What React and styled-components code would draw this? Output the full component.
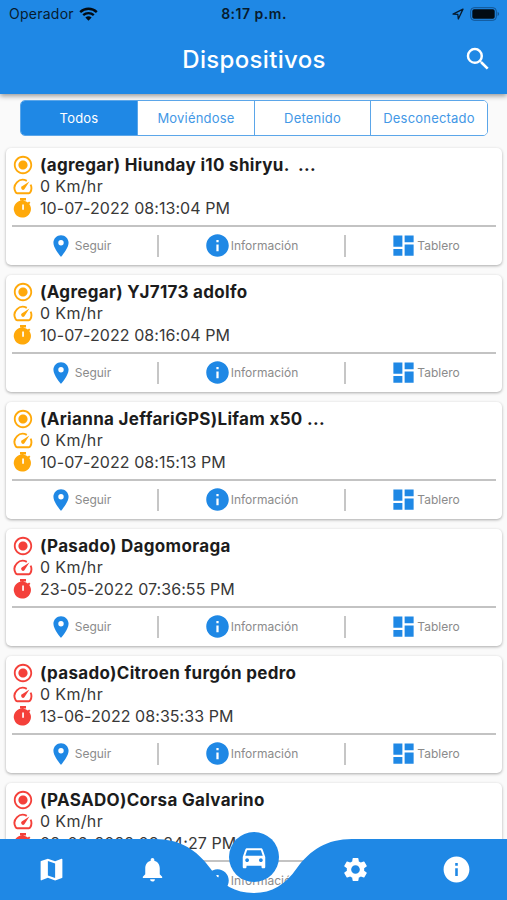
import React from 'react'
import styled, { createGlobalStyle } from 'styled-components'
import {
    MdDashboard,
    MdDirectionsCar,
    MdInfo,
    MdMap,
    MdNotifications,
    MdPlace,
    MdRadioButtonChecked,
    MdSearch,
    MdSettings,
} from 'react-icons/md'

const BLUE = '#1f88e5'
const AMBER = '#ffa90a'
const RED = '#f4403a'

const GlobalStyle = createGlobalStyle`
    * {
        box-sizing: border-box;
    }

    body {
        margin: 0;
        overflow: hidden;
        background: #fafafa;
        font-family: Inter, "Liberation Sans", sans-serif;
    }

    svg {
        display: block;
        flex: none;
    }
`

const Screen = styled.div`
    position: relative;
    display: flex;
    flex-direction: column;
    width: 507px;
    height: 900px;
    overflow: hidden;
`

const Header = styled.header`
    flex: none;
    height: 94px;
    background: ${BLUE};
    box-shadow: 0 2px 5px rgba(0, 0, 0, 0.4);
`

const StatusBar = styled.div`
    display: grid;
    grid-template-columns: 1fr auto 1fr;
    align-items: center;
    height: 27px;
    padding: 0 7px 0 9px;
    color: #071b2e;
    font-size: 14px;
`

const Carrier = styled.div`
    display: flex;
    align-items: center;
    gap: 5px;
    letter-spacing: 0.25px;
`

const Clock = styled.div`
    margin-left: -1px;
    font-weight: 600;
    letter-spacing: 0.5px;
`

const Power = styled.div`
    display: flex;
    align-items: center;
    justify-content: flex-end;
    gap: 6px;
`

const TitleBar = styled.div`
    display: grid;
    grid-template-columns: 48px 1fr 48px;
    align-items: center;
    height: 64px;
    padding: 0 5px 0 6px;
    color: #fff;
`

const Title = styled.h1`
    grid-column: 2;
    margin: 0;
    font-size: 24px;
    font-weight: 500;
    letter-spacing: 0.33px;
    text-align: center;
`

const SearchButton = styled.div`
    display: flex;
    justify-content: center;
`

const Tabs = styled.div`
    display: grid;
    flex: none;
    grid-template-columns: 116px 117px 116px 1fr;
    height: 36px;
    margin: 6px 19px 12px 20px;
    overflow: hidden;
    background: #fff;
    border: 1px solid #5ba6e9;
    border-radius: 5px;
`

const Tab = styled.div`
    display: flex;
    align-items: center;
    justify-content: center;
    border-left: ${(props) => (props.$first ? '0' : '1px solid #5ba6e9')};
    background: ${(props) => (props.$active ? BLUE : '#fff')};
    color: ${(props) => (props.$active ? '#fff' : '#4398e6')};
    font-size: 13px;
    letter-spacing: 0.2px;
`

const List = styled.main`
    display: flex;
    flex-direction: column;
    gap: 10px;
    padding: 0 5px 0 6px;
`

const Card = styled.article`
    flex: none;
    height: 117px;
    padding: 6px 6px 0;
    background: #fff;
    border-radius: 5px;
    box-shadow: 0 1px 3px rgba(0, 0, 0, 0.32);
`

const Line = styled.div`
    display: flex;
    align-items: center;
    gap: 7px;
    height: ${(props) => props.$height || 22}px;
    padding-left: 1px;
    color: #383838;
    font-size: 16px;
    letter-spacing: ${(props) => props.$spacing || 0.06}px;
    white-space: pre;
`

const IconSlot = styled.span`
    display: flex;
    justify-content: center;
    width: 20px;
    color: ${(props) => props.$color};
`

const Name = styled.strong`
    color: #1c1c1c;
    font-size: 17px;
    font-weight: 700;
    letter-spacing: 0.32px;
`

const Actions = styled.div`
    display: grid;
    grid-template-columns: 145px 1px 186px 1px 1fr;
    align-items: center;
    height: 39px;
    margin-top: 5px;
    border-top: 2px solid #c3c3c3;
`

const Divider = styled.span`
    width: 2px;
    height: 22px;
    background: #c6c6c6;
`

const Action = styled.div`
    display: flex;
    align-items: center;
    justify-content: center;
    gap: ${(props) => props.$gap}px;
    padding: ${(props) => props.$pad || 0};
    color: #8b8b8b;
    font-size: 12px;

    svg {
        color: ${BLUE};
    }
`

const Nav = styled.nav`
    position: absolute;
    right: 0;
    bottom: 0;
    left: 0;
    height: 69px;
`

const NavShape = styled.svg`
    width: 507px;
    height: 61px;
    margin-top: 8px;
    fill: ${BLUE};
`

const NavItems = styled.div`
    position: absolute;
    inset: 8px 0 0;
    display: grid;
    grid-template-columns: repeat(5, 1fr);
    align-items: center;
    justify-items: center;
    padding-left: 1px;
    color: #fff;
`

const Current = styled.div`
    display: flex;
    align-items: center;
    justify-content: center;
    width: 50px;
    height: 50px;
    margin-top: -26px;
    background: ${BLUE};
    border-radius: 50%;
`

const Wifi = () => (
    <svg width="19" height="14" viewBox="0 0 19 14" fill="none" stroke="#020b13">
        <path d="M1.2 5.1a12 12 0 0 1 16.6 0" strokeWidth="2.4" />
        <path d="M4.2 8.2a7.7 7.7 0 0 1 10.6 0" strokeWidth="2.3" />
        <path d="M6.4 10.6a4.5 4.5 0 0 1 6.2 0L9.5 13.8Z" fill="#020b13" stroke="none" />
    </svg>
)

const Gauge = () => (
    <svg width="20" height="17" viewBox="0 0 20 17" fill="none">
        <path
            d="M13.8 2.9A8.2 8.2 0 0 0 2.7 14.2Q3.1 15.2 4.1 15.2h11.8q1 0 1.4-1A8.2 8.2 0 0 0 17.6 6.6"
            stroke="currentColor"
            strokeWidth="1.9"
        />
        <path
            d="M16.4 3.6 11.4 11.3A1.9 1.9 0 0 1 8.7 8.6Z"
            fill="currentColor"
        />
    </svg>
)

const Stopwatch = () => (
    <svg width="20" height="20" viewBox="0 0 20 20">
        <path
            fill="currentColor"
            fillRule="evenodd"
            d="M7 0h6v2.4H7zM10 2.4a8.3 8.3 0 0 1 4.9 2.1l1.2-1.1 1.3 1.3-1.1 1.2A8.6 8.6 0 1 1 10 2.4zM9.2 6.6v5.2h1.7V6.6z"
        />
    </svg>
)

const LocationArrow = () => (
    <svg width="12" height="12" viewBox="0 0 12 12" fill="none">
        <path
            d="M1 6.1 11 1.1 6.3 11 5.8 6.3Z"
            stroke="currentColor"
            strokeWidth="1.3"
            strokeLinejoin="round"
        />
    </svg>
)

const Battery = () => (
    <svg width="30" height="14" viewBox="0 0 30 14">
        <rect x=".7" y=".7" width="25.6" height="12.6" rx="3.4" fill="none" stroke="#125391" />
        <rect x="2.3" y="2.3" width="22.4" height="9.4" rx="1.8" fill="#020b13" />
        <path d="M27.6 4.8q3 2.2 0 4.4z" fill="#125391" />
    </svg>
)

const devices = [
    { name: '(agregar) Hiunday i10 shiryu.  ...', date: '10-07-2022 08:13:04 PM', color: AMBER },
    { name: '(Agregar) YJ7173 adolfo', date: '10-07-2022 08:16:04 PM', color: AMBER },
    { name: '(Arianna JeffariGPS)Lifam x50 ...', date: '10-07-2022 08:15:13 PM', color: AMBER },
    { name: '(Pasado) Dagomoraga', date: '23-05-2022 07:36:55 PM', color: RED },
    { name: '(pasado)Citroen furgón pedro', date: '13-06-2022 08:35:33 PM', color: RED },
    { name: '(PASADO)Corsa Galvarino', date: '02-06-2022 08:24:27 PM', color: RED },
]

const tabs = ['Todos', 'Moviéndose', 'Detenido', 'Desconectado']

const Device = ({ name, date, color }) => (
    <Card>
        <Line>
            <IconSlot $color={color}>
                <MdRadioButtonChecked size={22} />
            </IconSlot>
            <Name>{name}</Name>
        </Line>
        <Line $height={20} $spacing={0.35}>
            <IconSlot $color={color}>
                <Gauge />
            </IconSlot>
            0 Km/hr
        </Line>
        <Line $height={24}>
            <IconSlot $color={color}>
                <Stopwatch />
            </IconSlot>
            {date}
        </Line>
        <Actions>
            <Action $gap={1} $pad="0 10px 0 0">
                <MdPlace size={26} />
                Seguir
            </Action>
            <Divider />
            <Action $gap={0}>
                <MdInfo size={27} />
                Información
            </Action>
            <Divider />
            <Action $gap={0} $pad="0 0 0 9px">
                <MdDashboard size={27} />
                Tablero
            </Action>
        </Actions>
    </Card>
)

const App = () => (
    <Screen>
        <GlobalStyle />
        <Header>
            <StatusBar>
                <Carrier>
                    Operador
                    <Wifi />
                </Carrier>
                <Clock>8:17 p.m.</Clock>
                <Power>
                    <LocationArrow />
                    <Battery />
                </Power>
            </StatusBar>
            <TitleBar>
                <Title>Dispositivos</Title>
                <SearchButton>
                    <MdSearch size={30} />
                </SearchButton>
            </TitleBar>
        </Header>
        <Tabs>
            {tabs.map((tab, i) => (
                <Tab key={tab} $first={i === 0} $active={i === 0}>
                    {tab}
                </Tab>
            ))}
        </Tabs>
        <List>
            {devices.map((device) => (
                <Device key={device.name} {...device} />
            ))}
        </List>
        <Nav>
            <NavShape viewBox="0 0 507 61">
                <path d="M0 0H155C180 0 197 11 210 29C222 46 235 54 253.5 54C272 54 285 46 297 29C310 11 327 0 352 0H507V61H0Z" />
            </NavShape>
            <NavItems>
                <MdMap size={29} />
                <MdNotifications size={29} />
                <Current>
                    <MdDirectionsCar size={30} />
                </Current>
                <MdSettings size={29} />
                <MdInfo size={31} />
            </NavItems>
        </Nav>
    </Screen>
)

export default App
